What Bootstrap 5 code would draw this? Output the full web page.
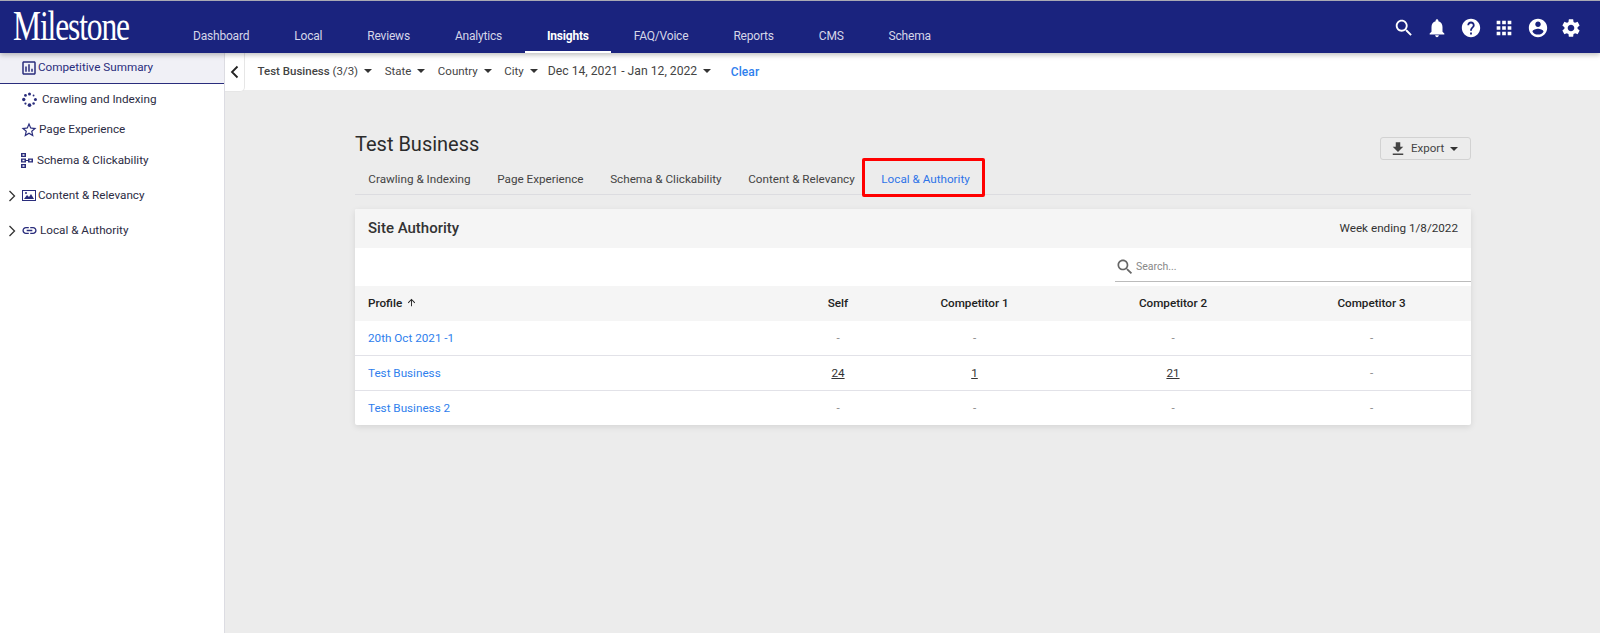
<!doctype html>
<html lang="en">

<head>
  <meta charset="utf-8" />
  <meta name="viewport" content="width=device-width, initial-scale=1" />
  <title>Milestone Insights</title>
  <link href="https://cdn.jsdelivr.net/npm/bootstrap@5.3.5/dist/css/bootstrap.min.css" rel="stylesheet" />
  <style>
    body {
      font-family: Roboto, "Liberation Sans", sans-serif;
      font-size: 12px;
      color: #333;
      background-color: #ececec;
      height: 633px;
      overflow: hidden;
    }

    svg {
      fill: currentColor;
      flex-shrink: 0;
    }

    .top-bar {
      height: 53px;
      background-color: #1a237e;
      border-top: 1px solid #a9a9b4;
      box-shadow: 0 2px 5px rgba(0, 0, 0, .25);
      position: relative;
      z-index: 2;
    }

    .brand-box {
      width: 170.5px;
      overflow: hidden;
    }

    .brand-text {
      padding-left: 13px;
      font-family: "Liberation Serif", serif;
      font-size: 42px;
      line-height: 50px;
      letter-spacing: -1.5px;
      color: #fff;
      display: inline-block;
      transform: scaleX(.75);
      transform-origin: 13px 0;
    }

    .top-link {
      display: block;
      height: 52px;
      line-height: 71px;
      padding: 0 22.5px;
      color: #d5d6e8;
      letter-spacing: -.2px;
      text-decoration: none;
    }

    .top-link.current {
      color: #fff;
      font-weight: 700;
      border-bottom: 2px solid #fff;
    }

    .top-icons {
      gap: 11.5px;
      color: #fff;
      padding-right: 18px;
      padding-top: 2px;
    }

    .side-panel {
      width: 225px;
      flex-shrink: 0;
      background-color: #fff;
      border-right: 1px solid #dcdce2;
      color: #2c2c44;
      font-size: 11.7px;
    }

    .side-item {
      display: flex;
      align-items: center;
      height: 30.5px;
      padding-left: 20px;
      white-space: nowrap;
    }

    .side-item svg {
      color: #2a2d7c;
    }

    .side-item.current {
      height: 31px;
      background-color: #f0f0f6;
      border-bottom: 1px solid #2a2d7c;
      color: #2a2d7c;
      margin-bottom: .5px;
    }

    .side-item.side-group {
      padding-left: 8px;
      height: 35px;
    }

    .side-item svg.side-chevron {
      color: #333;
      margin-right: 6px;
    }

    .filter-bar {
      height: 37px;
      background-color: #fff;
      font-size: 11.5px;
      color: #444;
      position: relative;
    }

    .collapse-tab {
      width: 20px;
      height: 39px;
      background-color: #fff;
      border-right: 1px solid #e6e6e6;
      border-bottom: 1px solid #e6e6e6;
      border-bottom-right-radius: 5px;
      margin-right: 12.5px;
      color: #222;
    }

    .filter-item {
      margin-right: 12.5px;
      white-space: nowrap;
    }

    .filter-item.tight {
      margin-right: 10px;
    }

    .filter-date {
      font-size: 12.2px;
    }

    .caret-mark {
      display: inline-block;
      width: 0;
      height: 0;
      margin-left: 6px;
      vertical-align: 2px;
      border-top: 4px solid #333;
      border-left: 4px solid transparent;
      border-right: 4px solid transparent;
    }

    .clear-link {
      color: #2f80ed;
      font-size: 12px;
      font-weight: 500;
      letter-spacing: .1px;
      text-decoration: none;
      margin-left: 7px;
    }

    .report-area {
      padding: 40px 129px 0 130px;
    }

    .report-title {
      font-size: 20px;
      font-weight: 400;
      line-height: 28px;
      margin: 0;
      color: #2b2b2b;
    }

    .export-btn {
      width: 91px;
      height: 23px;
      margin-top: 7px;
      padding: 0 0 0 8px;
      font-size: 11.5px;
      color: #444;
      background-color: #ececec;
      border: 1px solid #d2d2d2;
      border-radius: 3px;
    }

    .report-tabs {
      height: 37px;
      margin-top: -2px;
      border-bottom: 1px solid #dcdce0;
    }

    .report-tab {
      position: relative;
      padding: 0 13.3px;
      color: #444;
      text-decoration: none;
      line-height: 43px;
      white-space: nowrap;
      font-size: 11.7px;
    }

    .report-tab.current {
      color: #2f74e8;
    }

    .red-box {
      position: absolute;
      left: -6px;
      top: 0;
      width: 123px;
      height: 39px;
      border: 3px solid #f00;
      border-radius: 2px;
    }

    .authority-card {
      margin-top: 14px;
      border: 0;
      border-radius: 2px;
      box-shadow: 0 2px 6px rgba(0, 0, 0, .1);
      overflow: hidden;
    }

    .authority-head {
      height: 39px;
      padding: 0 13px;
      background-color: #f5f5f5;
    }

    .authority-name {
      font-size: 15px;
      font-weight: 500;
      color: #333;
    }

    .week-text {
      font-size: 11.7px;
    }

    .search-row {
      height: 38px;
      background-color: #fff;
    }

    .search-field {
      width: 356px;
      height: 34px;
      padding-top: 4px;
      border-bottom: 1px solid #bbb;
      color: #666;
      font-size: 10.5px;
    }

    .search-field span {
      color: #888;
    }

    .authority-table {
      table-layout: fixed;
      margin: 0;
      width: 100%;
    }

    .authority-table th {
      height: 35px;
      padding: 0 13px;
      background-color: #f5f5f5;
      font-size: 11.7px;
      font-weight: 500;
      color: #222;
      border: 0;
      vertical-align: middle;
    }

    .authority-table td {
      height: 34.5px;
      padding: 2px 13px 0;
      font-size: 11.7px;
      color: #888;
      vertical-align: middle;
      border-bottom: 1px solid #e2e2e8;
    }

    .authority-table tr:last-child td {
      border-bottom: 0;
    }

    .authority-table td a.name-link {
      color: #2f80ed;
      text-decoration: none;
    }

    .authority-table td a.num-link {
      color: #333;
    }
  </style>
</head>

<body>
  <nav class="top-bar d-flex align-items-stretch">
    <div class="brand-box"><span class="brand-text">Milestone</span></div>
    <div class="d-flex flex-grow-1">
      <a class="top-link" href="#">Dashboard</a>
      <a class="top-link" href="#">Local</a>
      <a class="top-link" href="#">Reviews</a>
      <a class="top-link" href="#">Analytics</a>
      <a class="top-link current" href="#">Insights</a>
      <a class="top-link" href="#">FAQ/Voice</a>
      <a class="top-link" href="#">Reports</a>
      <a class="top-link" href="#">CMS</a>
      <a class="top-link" href="#">Schema</a>
    </div>
    <div class="top-icons d-flex align-items-center">
      <svg width="22" height="22" viewBox="0 0 24 24"><path d="M15.5 14h-.79l-.28-.27C15.41 12.59 16 11.11 16 9.5 16 5.91 13.09 3 9.5 3S3 5.91 3 9.5 5.91 16 9.5 16c1.61 0 3.09-.59 4.23-1.57l.27.28v.79l5 4.99L20.49 19l-4.99-5zm-6 0C7.01 14 5 11.99 5 9.5S7.01 5 9.5 5 14 7.01 14 9.5 11.99 14 9.5 14z"/></svg>
      <svg width="22" height="22" viewBox="0 0 24 24"><path d="M12 22c1.1 0 2-.9 2-2h-4c0 1.1.89 2 2 2zm6-6v-5c0-3.07-1.64-5.64-4.5-6.32V4c0-.83-.67-1.5-1.5-1.5s-1.5.67-1.5 1.5v.68C7.63 5.36 6 7.92 6 11v5l-2 2v1h16v-1l-2-2z"/></svg>
      <svg width="22" height="22" viewBox="0 0 24 24"><path d="M12 2C6.48 2 2 6.48 2 12s4.48 10 10 10 10-4.48 10-10S17.52 2 12 2zm1 17h-2v-2h2v2zm2.07-7.75l-.9.92C13.45 12.9 13 13.5 13 15h-2v-.5c0-1.1.45-2.1 1.17-2.83l1.24-1.26c.37-.36.59-.86.59-1.41 0-1.1-.9-2-2-2s-2 .9-2 2H8c0-2.21 1.79-4 4-4s4 1.79 4 4c0 .88-.36 1.68-.93 2.25z"/></svg>
      <svg width="22" height="22" viewBox="0 0 24 24"><path d="M4 8h4V4H4v4zm6 12h4v-4h-4v4zm-6 0h4v-4H4v4zm0-6h4v-4H4v4zm6 0h4v-4h-4v4zm6-10v4h4V4h-4zm-6 4h4V4h-4v4zm6 6h4v-4h-4v4zm0 6h4v-4h-4v4z"/></svg>
      <svg width="22" height="22" viewBox="0 0 24 24"><path d="M12 2C6.48 2 2 6.48 2 12s4.48 10 10 10 10-4.48 10-10S17.52 2 12 2zm0 3c1.66 0 3 1.34 3 3s-1.34 3-3 3-3-1.34-3-3 1.34-3 3-3zm0 14.2c-2.5 0-4.71-1.28-6-3.22.03-1.99 4-3.08 6-3.08 1.99 0 5.97 1.09 6 3.08-1.29 1.94-3.5 3.22-6 3.22z"/></svg>
      <svg width="22" height="22" viewBox="0 0 24 24"><path d="M19.14 12.94c.04-.3.06-.61.06-.94 0-.32-.02-.64-.07-.94l2.03-1.58c.18-.14.23-.41.12-.61l-1.92-3.32c-.12-.22-.37-.29-.59-.22l-2.39.96c-.5-.38-1.03-.7-1.62-.94l-.36-2.54c-.04-.24-.24-.41-.48-.41h-3.84c-.24 0-.43.17-.47.41l-.36 2.54c-.59.24-1.13.57-1.62.94l-2.39-.96c-.22-.08-.47 0-.59.22L2.74 8.87c-.12.21-.08.47.12.61l2.03 1.58c-.05.3-.09.63-.09.94s.02.64.07.94l-2.03 1.58c-.18.14-.23.41-.12.61l1.92 3.32c.12.22.37.29.59.22l2.39-.96c.5.38 1.03.7 1.62.94l.36 2.54c.05.24.24.41.48.41h3.84c.24 0 .44-.17.47-.41l.36-2.54c.59-.24 1.13-.56 1.62-.94l2.39.96c.22.08.47 0 .59-.22l1.92-3.32c.12-.22.07-.47-.12-.61l-2.01-1.58zM12 15.6c-1.98 0-3.6-1.62-3.6-3.6s1.62-3.6 3.6-3.6 3.6 1.62 3.6 3.6-1.62 3.6-3.6 3.6z"/></svg>
    </div>
  </nav>

  <div class="d-flex" style="height:580px">
    <aside class="side-panel">
      <div class="side-item current">
        <svg width="18" height="18" viewBox="0 0 24 24"><path d="M19 3H5c-1.1 0-2 .9-2 2v14c0 1.1.9 2 2 2h14c1.1 0 2-.9 2-2V5c0-1.1-.9-2-2-2zm0 16H5V5h14v14zM7 10h2v7H7zm4-3h2v10h-2zm4 6h2v4h-2z"/></svg>
        <span>Competitive Summary</span>
      </div>
      <div class="side-item">
        <svg width="15" height="15" viewBox="0 0 24 24" style="margin:0 5px 0 2px"><circle cx="12" cy="3" r="2.4"/><circle cx="18.500" cy="5.500" r="1.500"/><circle cx="21.500" cy="12" r="2.400"/><circle cx="18.500" cy="18.500" r="2"/><circle cx="12" cy="21" r="2.900"/><circle cx="5.500" cy="18.500" r="1.800"/><circle cx="2.800" cy="12" r="2.700"/><circle cx="5.500" cy="5.500" r="2.200"/></svg>
        <span>Crawling and Indexing</span>
      </div>
      <div class="side-item">
        <svg width="18" height="18" viewBox="0 0 24 24" style="margin-right:1px"><path d="M22 9.24l-7.19-.62L12 2 9.19 8.63 2 9.24l5.46 4.73L5.82 21 12 17.27 18.18 21l-1.63-7.03L22 9.24zM12 15.4l-3.76 2.27 1-4.28-3.32-2.88 4.38-.38L12 6.1l1.71 4.04 4.38.38-3.32 2.88 1 4.28L12 15.4z"/></svg>
        <span>Page Experience</span>
      </div>
      <div class="side-item" style="padding-left:21px">
        <svg width="12" height="15" viewBox="0 0 12 15" style="margin-right:4px"><path d="M0 0h5v4H0zM1.500 1.300v1.400h2V1.300zM0 5.500h5v4H0zM1.500 6.800v1.400h2V6.800zM0 11h5v4H0zM1.500 12.300v1.400h2v-1.400zM5 7h2v1H5zM7 5.500h5v4H7zM8.500 6.800v1.400h2V6.800z" fill-rule="evenodd"/></svg>
        <span>Schema &amp; Clickability</span>
      </div>
      <div class="side-item side-group" style="margin-top:2px">
        <svg class="side-chevron" width="8" height="12" viewBox="0 0 8 12"><path d="M1.500 1l5 5-5 5" fill="none" stroke="currentColor" stroke-width="1.300"/></svg>
        <svg width="14" height="13" viewBox="0 0 14 13" style="margin-right:2px"><path d="M0 1h14v11H0zM1 2v9h12V2zM2 10l3-4 2 2 2-3 3 5z" fill-rule="evenodd"/><circle cx="4" cy="4" r="1"/></svg>
        <span>Content &amp; Relevancy</span>
      </div>
      <div class="side-item side-group">
        <svg class="side-chevron" width="8" height="12" viewBox="0 0 8 12"><path d="M1.500 1l5 5-5 5" fill="none" stroke="currentColor" stroke-width="1.300"/></svg>
        <svg width="17" height="17" viewBox="0 0 24 24" style="margin:0 2px 0 -1px"><path d="M3.900 12c0-1.710 1.390-3.100 3.100-3.100h4V7H7c-2.760 0-5 2.240-5 5s2.240 5 5 5h4v-1.900H7c-1.710 0-3.100-1.390-3.100-3.100zM8 13h8v-2H8v2zm9-6h-4v1.900h4c1.710 0 3.100 1.390 3.100 3.100s-1.390 3.100-3.100 3.100h-4V17h4c2.760 0 5-2.240 5-5s-2.240-5-5-5z"/></svg>
        <span>Local &amp; Authority</span>
      </div>
    </aside>

    <main class="flex-grow-1">
      <div class="filter-bar d-flex align-items-center">
        <div class="collapse-tab d-flex align-items-center justify-content-center align-self-start">
          <svg width="10" height="14" viewBox="0 0 10 14"><path d="M7.500 1.500L2 7l5.500 5.500" fill="none" stroke="currentColor" stroke-width="1.800"/></svg>
        </div>
        <span class="filter-item"><b class="fw-medium">Test Business</b> (3/3)<i class="caret-mark"></i></span>
        <span class="filter-item">State<i class="caret-mark"></i></span>
        <span class="filter-item">Country<i class="caret-mark"></i></span>
        <span class="filter-item tight">City<i class="caret-mark"></i></span>
        <span class="filter-item filter-date">Dec 14, 2021 - Jan 12, 2022<i class="caret-mark"></i></span>
        <a class="clear-link" href="#">Clear</a>
      </div>

      <div class="report-area">
        <div class="d-flex justify-content-between align-items-start">
          <h1 class="report-title">Test Business</h1>
          <button class="export-btn d-flex align-items-center" type="button">
            <svg style="margin-right:4px" width="18" height="18" viewBox="0 0 24 24"><path d="M19 9h-4V3H9v6H5l7 7 7-7zM5 18v2h14v-2H5z"/></svg>
            Export<i class="caret-mark"></i>
          </button>
        </div>

        <div class="report-tabs d-flex align-items-start">
          <a class="report-tab" href="#">Crawling &amp; Indexing</a>
          <a class="report-tab" href="#">Page Experience</a>
          <a class="report-tab" href="#">Schema &amp; Clickability</a>
          <a class="report-tab" href="#">Content &amp; Relevancy</a>
          <a class="report-tab current" href="#">Local &amp; Authority<span class="red-box"></span></a>
        </div>

        <div class="card authority-card">
          <div class="authority-head d-flex align-items-center justify-content-between">
            <span class="authority-name">Site Authority</span>
            <span class="week-text">Week ending 1/8/2022</span>
          </div>
          <div class="search-row d-flex justify-content-end">
            <div class="search-field d-flex align-items-center">
              <svg width="20" height="20" viewBox="0 0 24 24" style="margin-right:1px"><path d="M15.500 14h-.790l-.280-.270C15.410 12.590 16 11.110 16 9.500 16 5.910 13.090 3 9.500 3S3 5.910 3 9.500 5.910 16 9.500 16c1.610 0 3.090-.590 4.230-1.570l.270.280v.790l5 4.990L20.490 19l-4.990-5zm-6 0C7.010 14 5 11.990 5 9.500S7.010 5 9.500 5 14 7.010 14 9.500 11.990 14 9.500 14z"/></svg>
              <span>Search...</span>
            </div>
          </div>
          <table class="table authority-table">
            <colgroup>
              <col style="width:446px" />
              <col style="width:74px" />
              <col style="width:199px" />
              <col style="width:198px" />
              <col style="width:199px" />
            </colgroup>
            <thead>
              <tr>
                <th>Profile <svg width="11" height="11" viewBox="0 0 24 24" style="vertical-align:-1px;margin-left:1px"><path d="M4 12l1.410 1.410L11 7.830V20h2V7.830l5.580 5.590L20 12l-8-8-8 8z"/></svg></th>
                <th class="text-center">Self</th>
                <th class="text-center">Competitor 1</th>
                <th class="text-center">Competitor 2</th>
                <th class="text-center">Competitor 3</th>
              </tr>
            </thead>
            <tbody>
              <tr>
                <td><a class="name-link" href="#">20th Oct 2021 -1</a></td>
                <td class="text-center">-</td>
                <td class="text-center">-</td>
                <td class="text-center">-</td>
                <td class="text-center">-</td>
              </tr>
              <tr>
                <td><a class="name-link" href="#">Test Business</a></td>
                <td class="text-center"><a class="num-link" href="#">24</a></td>
                <td class="text-center"><a class="num-link" href="#">1</a></td>
                <td class="text-center"><a class="num-link" href="#">21</a></td>
                <td class="text-center">-</td>
              </tr>
              <tr>
                <td><a class="name-link" href="#">Test Business 2</a></td>
                <td class="text-center">-</td>
                <td class="text-center">-</td>
                <td class="text-center">-</td>
                <td class="text-center">-</td>
              </tr>
            </tbody>
          </table>
        </div>
      </div>
    </main>
  </div>

  <script src="https://cdn.jsdelivr.net/npm/bootstrap@5.3.5/dist/js/bootstrap.bundle.min.js"></script>
</body>

</html>
